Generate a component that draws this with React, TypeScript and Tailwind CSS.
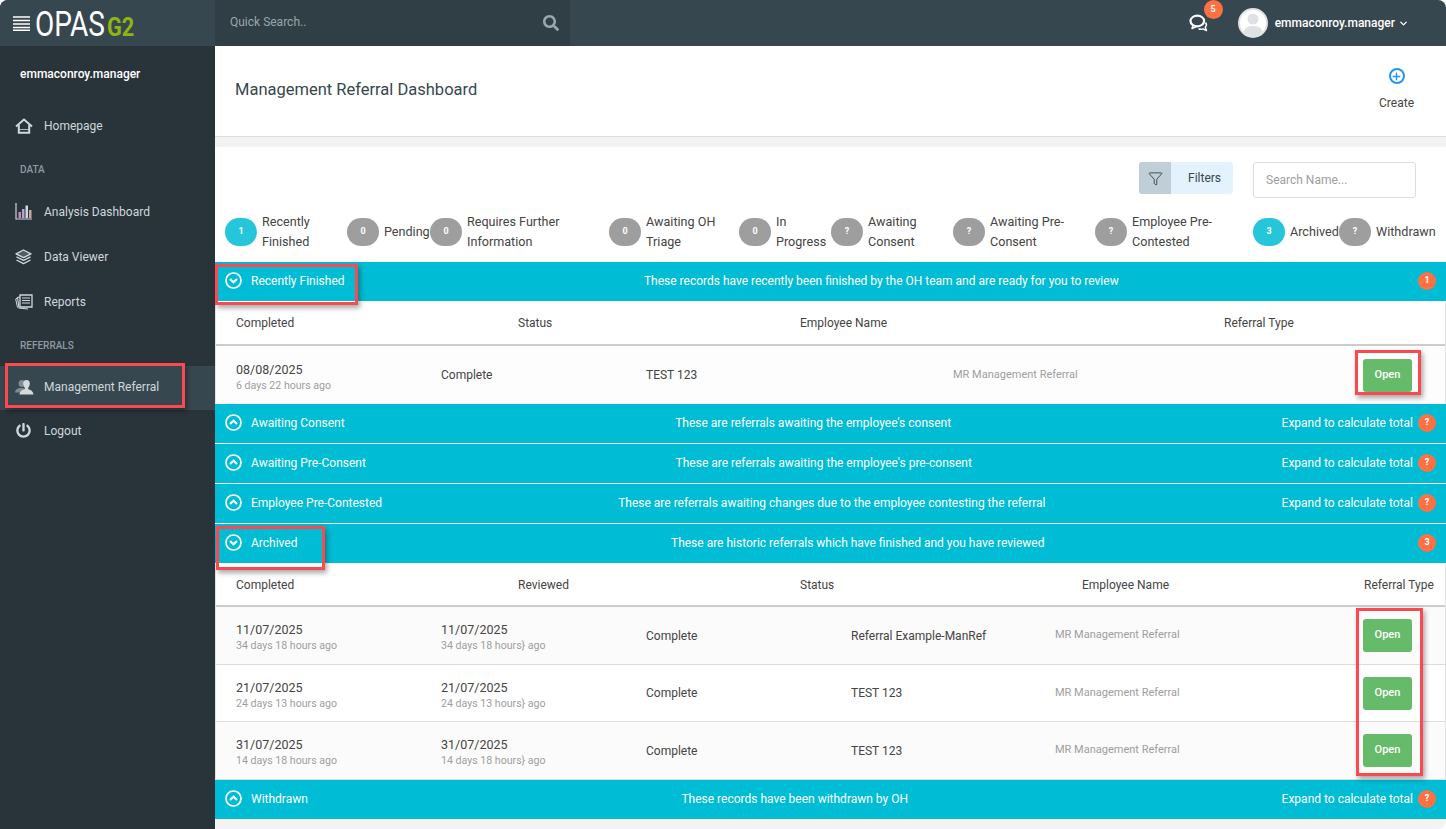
import React from "react";
import { FaSearch, FaPowerOff } from "react-icons/fa";
import { ChevronDown, Funnel, Plus } from "lucide-react";

const statuses = [
  { count: "1", label: ["Recently", "Finished"], active: true, width: "w-[122px]" },
  { count: "0", label: ["Pending"], active: false, width: "w-[83px]" },
  { count: "0", label: ["Requires Further", "Information"], active: false, width: "w-[179px]" },
  { count: "0", label: ["Awaiting OH", "Triage"], active: false, width: "w-[130px]" },
  { count: "0", label: ["In", "Progress"], active: false, width: "w-[92px]" },
  { count: "?", label: ["Awaiting", "Consent"], active: false, width: "w-[122px]" },
  { count: "?", label: ["Awaiting Pre-", "Consent"], active: false, width: "w-[142px]" },
  { count: "?", label: ["Employee Pre-", "Contested"], active: false, width: "w-[158px]" },
  { count: "3", label: ["Archived"], active: true, width: "w-[86px]" },
  { count: "?", label: ["Withdrawn"], active: false, width: "w-[97px]" },
];

const archivedRows = [
  { date: "11/07/2025", ago: "34 days 18 hours ago", agoReviewed: "34 days 18 hours} ago", name: "Referral Example-ManRef", height: "h-[58px]", bg: "bg-[#fbfbfb]" },
  { date: "21/07/2025", ago: "24 days 13 hours ago", agoReviewed: "24 days 13 hours} ago", name: "TEST 123", height: "h-[57px]", bg: "bg-white" },
  { date: "31/07/2025", ago: "14 days 18 hours ago", agoReviewed: "14 days 18 hours} ago", name: "TEST 123", height: "h-[58px]", bg: "bg-[#fbfbfb]" },
];

const HomeIcon = () => (
  <svg width="18" height="16" viewBox="0 0 18 16" fill="none" stroke="#cfd8dc" strokeWidth="2">
    <path d="M1 8.500 9 1.500 17 8.500" />
    <path d="M3.800 7v7.800h10.400V7" />
    <path d="M4 11.500h10" strokeWidth="0.8" />
  </svg>
);

const ChartIcon = () => (
  <svg width="18" height="17" viewBox="0 0 18 17" fill="none">
    <path d="M1 0v16h16" stroke="#d7cfe6" strokeWidth="1.200" />
    <rect x="3.500" y="9" width="2.500" height="6" fill="#c78ab5" />
    <rect x="7" y="6" width="2.500" height="9" fill="#b3a3d6" />
    <rect x="10.500" y="2.500" width="2.500" height="12.500" fill="#cfd8dc" />
    <rect x="14" y="7" width="2.500" height="8" fill="#c9a7a0" />
  </svg>
);

const LayersIcon = () => (
  <svg width="17" height="16" viewBox="0 0 17 16" fill="none" stroke="#cfd8dc" strokeWidth="1.400" strokeLinejoin="round">
    <path d="M8.500 1 16 4.800 8.500 8.600 1 4.800Z" fill="#cfd8dc" fillOpacity="0.25" />
    <path d="M1.500 7.800 8.500 11.300 15.500 7.800" />
    <path d="M1.500 11 8.500 14.600 15.500 11" />
  </svg>
);

const ReportsIcon = () => (
  <svg width="18" height="16" viewBox="0 0 18 16" fill="none" stroke="#cfd8dc">
    <path d="M5 1h12v12H5Z" strokeWidth="1.300" />
    <path d="M7 4h8M7 6.500h8M7 9h8" strokeWidth="1.100" />
    <path d="M5 3 2.500 3.500 4 14l9 1" strokeWidth="1.100" />
    <path d="M2.500 4 .7 5 2.500 13.500" strokeWidth="1" />
  </svg>
);

const ReferralIcon = () => (
  <svg width="19" height="17" viewBox="0 0 19 17">
    <circle cx="7" cy="4.500" r="3.500" fill="#7f8c93" />
    <path d="M0 13.500c.5-3.500 3-4.500 6-4.500s5 1 5.500 4.500Z" fill="#7f8c93" />
    <path d="M11.500 1c2.500 0 3.600 1.800 3.300 4-.2 1.700-1 3.200-1.600 3.800v1.400c2.500.6 4.800 1.700 5.300 5.300H4.500c.5-3.600 2.800-4.700 5.300-5.300V8.800C9.200 8.200 8.400 6.700 8.200 5 7.900 2.800 9 1 11.500 1Z" fill="#d5dadc" />
  </svg>
);

const ChatIcon = () => (
  <svg width="19" height="18" viewBox="0 0 19 18" fill="none" stroke="white" strokeLinejoin="round">
    <path d="M16.500 8.500c1.200 1.500 1 3.500-.3 4.800l1.300 3.200-3.700-1.600c-1.500.4-3 .3-4.300-.2" strokeWidth="1.500" />
    <ellipse cx="8.300" cy="7" rx="6.800" ry="5.300" strokeWidth="2.200" />
    <path d="M4 11 3 14.500 7.500 12.500" strokeWidth="1.500" />
  </svg>
);

const ChevronCircle = ({ up }: { up: boolean }) => (
  <svg width="17" height="17" viewBox="0 0 17 17" fill="none" stroke="white" className="shrink-0">
    <circle cx="8.500" cy="8.500" r="7.500" strokeWidth="1.700" />
    <path d={up ? "M5 10 8.500 6.800 12 10" : "M5 7 8.500 10.200 12 7"} strokeWidth="2.200" />
  </svg>
);

const SideItem = ({ icon, label, active, height }: { icon: React.ReactNode; label: string; active?: boolean; height: string }) => (
  <div className={`flex items-center pl-[15px] text-[12px] text-[#cfd8dc] ${height} ${active ? "bg-[#37474f]" : ""}`}>
    <span className="w-[29px] flex items-center">{icon}</span>
    {label}
  </div>
);

const SideHeading = ({ label, className }: { label: string; className: string }) => (
  <div className={`flex items-center pl-[20px] text-[10px] font-medium text-[#8d9aa1] ${className}`}>{label}</div>
);

const Bar = ({ title, text, up = true, count }: { title: string; text: string; up?: boolean; count?: string }) => (
  <div className="h-[40px] border-b border-white bg-[#00bcd4] pl-[10px] pr-[10px] pb-[2px] flex items-center justify-between text-[12px] text-white">
    <div className="flex items-center gap-[9px]">
      <ChevronCircle up={up} />
      <span>{title}</span>
    </div>
    <span>{text}</span>
    <div className="flex items-center gap-[5px]">
      {!count && <span>Expand to calculate total</span>}
      <span className="w-[18px] h-[18px] rounded-full bg-[#ff7043] flex items-center justify-center text-[9px] font-bold">
        {count ?? "?"}
      </span>
    </div>
  </div>
);

const OpenButton = () => (
  <button className="w-[49px] h-[33px] rounded-[3px] bg-[#66bb6a] text-white text-[11px] font-medium">Open</button>
);

const DateCell = ({ date, ago }: { date: string; ago: string }) => (
  <div className="pt-[3px]">
    <div className="text-[12.500px] leading-[15px] text-[#444]">{date}</div>
    <div className="text-[10.600px] leading-[13px] text-[#9e9e9e] mt-[2px]">{ago}</div>
  </div>
);

const Annotation = ({ className }: { className: string }) => (
  <div className={`absolute border-[3px] border-[#fb4a4f] shadow-[2px_3px_5px_rgba(0,0,0,0.35)] ${className}`} />
);

export default function App() {
  return (
    <div className="relative h-screen w-full overflow-hidden bg-[#f3f3f3] font-['Roboto',sans-serif] flex flex-col rounded-t-[8px] rounded-br-[8px]">
      <header className="h-[46px] shrink-0 bg-[#37474f] flex items-center">
        <div className="w-[215px] h-full flex items-center pl-[13px] bg-[#37474f]">
          <svg width="17" height="15" viewBox="0 0 17 15" stroke="white" strokeWidth="1.400">
            <path d="M0 1h17M0 4.500h17M0 8h17M0 11.500h17M0 14.300h17" />
          </svg>
          <span className="ml-[5px] mt-[2px] w-[72px] inline-block origin-left scale-x-[0.8] text-[35px] leading-none font-normal text-white">OPAS</span>
          <span className="w-[28px] inline-block origin-left scale-x-[0.87] text-[25px] leading-none font-bold text-[#8fb512] mt-[9px]">G2</span>
        </div>
        <div className="w-[355px] h-full bg-[#303e45] flex items-center justify-between pl-[15px] pr-[11px]">
          <span className="text-[12px] text-[#9aa7ad] pb-[2px]">Quick Search..</span>
          <FaSearch className="text-[#9aa7ad] text-[16px]" />
        </div>
        <div className="flex-1 flex items-center justify-end pr-[38px] text-white">
          <div className="relative mr-[30px] flex">
            <ChatIcon />
            <span className="absolute -top-[14px] left-[15px] w-[19px] h-[19px] rounded-full bg-[#ff7043] flex items-center justify-center text-[9px] font-bold">5</span>
          </div>
          <div className="w-[30px] h-[30px] rounded-full bg-white border-2 border-[#dfe1e4] overflow-hidden flex justify-center mr-[7px]">
            <svg width="26" height="26" viewBox="0 0 26 26" fill="#dfe1e4">
              <circle cx="13" cy="9" r="5.500" />
              <path d="M3 26c0-8 4-10 10-10s10 2 10 10Z" />
            </svg>
          </div>
          <span className="text-[12px] font-medium">emmaconroy.manager</span>
          <ChevronDown size={11} strokeWidth={3} className="ml-[3px] mr-[-1px]" />
        </div>
      </header>

      <div className="flex-1 flex min-h-0">
        <aside className="w-[215px] shrink-0 bg-[#29333a]">
          <div className="h-[57px] pb-[2px] pl-[20px] flex items-center text-[12px] font-medium text-white">emmaconroy.manager</div>
          <SideItem icon={<HomeIcon />} label="Homepage" height="h-[45px]" />
          <SideHeading label="DATA" className="h-[41px] pt-[2px]" />
          <SideItem icon={<ChartIcon />} label="Analysis Dashboard" height="h-[45px]" />
          <SideItem icon={<LayersIcon />} label="Data Viewer" height="h-[45px]" />
          <SideItem icon={<ReportsIcon />} label="Reports" height="h-[45px]" />
          <SideHeading label="REFERRALS" className="h-[42px]" />
          <SideItem icon={<ReferralIcon />} label="Management Referral" active height="h-[44px] pb-[2px]" />
          <SideItem icon={<FaPowerOff className="text-[15px] ml-px" />} label="Logout" height="h-[41px]" />
        </aside>

        <main className="flex-1 min-w-0">
          <div className="h-[91px] bg-white border-b border-[#dddddd] flex items-center justify-between pl-[20px] pr-[32px]">
            <h1 className="text-[16.500px] text-[#37474f] pb-[2px]">Management Referral Dashboard</h1>
            <div className="flex flex-col items-center text-[12px] text-[#444] pb-[2px]">
              <span className="w-[16px] h-[16px] rounded-full border-2 border-[#2196f3] flex items-center justify-center mb-[10px]">
                <Plus size={11} strokeWidth={3} className="text-[#2196f3]" />
              </span>
              Create
            </div>
          </div>
          <div className="h-[10px]" />

          <div className="bg-white pt-[15px]">
            <div className="flex justify-end pr-[30px]">
              <div className="flex h-[32px] rounded-[3px] overflow-hidden mr-[20px]">
                <span className="w-[32px] bg-[#c0ced8] flex items-center justify-center">
                  <Funnel size={15} strokeWidth={1.300} className="text-[#263238]" />
                </span>
                <span className="w-[62px] bg-[#e3f2fd] text-[12px] text-[#37474f] flex items-center pl-[17px]">Filters</span>
              </div>
              <input
                className="w-[163px] h-[36px] border border-[#dddddd] rounded-[3px] pl-[12px] text-[12px] placeholder:text-[#9e9e9e] outline-none"
                placeholder="Search Name..."
              />
            </div>
            <div className="flex pl-[10px] mt-[14px] h-[50px]">
              {statuses.map((s) => (
                <div key={s.label[0]} className={`flex items-start shrink-0 ${s.width}`}>
                  <span className={`shrink-0 w-[32px] h-[28px] mt-[6px] rounded-full flex items-center justify-center text-[9px] font-bold text-white ${s.active ? "bg-[#26c6da]" : "bg-[#9e9e9e]"}`}>
                    {s.count}
                  </span>
                  <div className={`ml-[5px] text-[12.600px] leading-[20px] text-[#444] ${s.label.length === 1 ? "mt-[10px]" : ""}`}>
                    {s.label.map((l) => (
                      <div key={l} className="whitespace-nowrap">{l}</div>
                    ))}
                  </div>
                </div>
              ))}
            </div>
          </div>

          <Bar title="Recently Finished" text="These records have recently been finished by the OH team and are ready for you to review" up={false} count="1" />
          <div className="border-x border-[#e3e3e3] bg-white">
            <div className="h-[44px] border-b-2 border-[#cccccc] grid grid-cols-[282px_282px_424px_1fr] items-center pl-[20px] text-[12px] text-[#444]">
              <span>Completed</span>
              <span>Status</span>
              <span>Employee Name</span>
              <span>Referral Type</span>
            </div>
            <div className="h-[58px] bg-[#fdfdfd] grid grid-cols-[205px_205px_307px_410px_1fr] items-center pl-[20px] text-[12px] text-[#444]">
              <DateCell date="08/08/2025" ago="6 days 22 hours ago" />
              <span>Complete</span>
              <span>TEST 123</span>
              <span className="text-[11px] text-[#9e9e9e]">MR Management Referral</span>
              <OpenButton />
            </div>
          </div>
          <Bar title="Awaiting Consent" text="These are referrals awaiting the employee's consent" />
          <Bar title="Awaiting Pre-Consent" text="These are referrals awaiting the employee's pre-consent" />
          <Bar title="Employee Pre-Contested" text="These are referrals awaiting changes due to the employee contesting the referral" />
          <Bar title="Archived" text="These are historic referrals which have finished and you have reviewed" up={false} count="3" />
          <div className="border-x border-[#e3e3e3] bg-white">
            <div className="h-[43px] border-b-2 border-[#cccccc] grid grid-cols-[282px_282px_282px_282px_1fr] items-center pl-[20px] text-[12px] text-[#444]">
              <span>Completed</span>
              <span>Reviewed</span>
              <span>Status</span>
              <span>Employee Name</span>
              <span>Referral Type</span>
            </div>
            {archivedRows.map((r) => (
              <div key={r.date} className={`${r.height} ${r.bg} border-b border-[#dddddd] grid grid-cols-[205px_205px_205px_204px_308px_1fr] items-center pl-[20px] text-[12px] text-[#444]`}>
                <DateCell date={r.date} ago={r.ago} />
                <DateCell date={r.date} ago={r.agoReviewed} />
                <span>Complete</span>
                <span>{r.name}</span>
                <span className="text-[11px] text-[#9e9e9e]">MR Management Referral</span>
                <OpenButton />
              </div>
            ))}
          </div>
          <Bar title="Withdrawn" text="These records have been withdrawn by OH" />
        </main>
      </div>

      <Annotation className="left-[5px] top-[363px] w-[180px] h-[45px]" />
      <Annotation className="left-[215px] top-[264px] w-[143px] h-[41px]" />
      <Annotation className="left-[1355px] top-[350px] w-[66px] h-[45px]" />
      <Annotation className="left-[216px] top-[526px] w-[109px] h-[44px]" />
      <Annotation className="left-[1356px] top-[608px] w-[67px] h-[168px]" />
    </div>
  );
}
